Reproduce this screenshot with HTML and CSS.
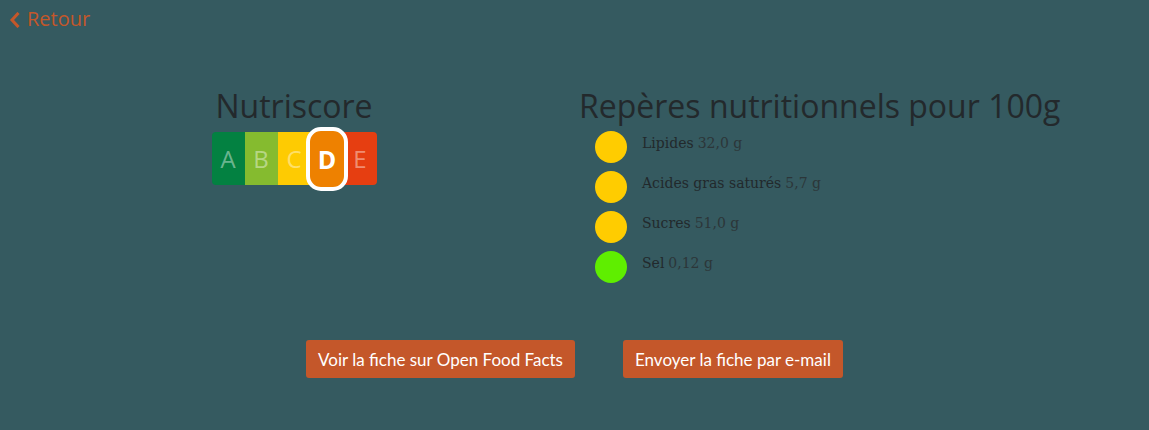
FILE: index.html
```html
<!DOCTYPE html>
<html lang="fr">
<head>
<meta charset="utf-8">
<title>Fiche produit</title>
<link rel="stylesheet" href="styles.css">
</head>
<body>
<div class="page">
  <a class="back" href="#">
    <svg class="chev" width="11" height="16" viewBox="0 0 11 16"><path d="M8.5 2 L3 8 L8.5 14" fill="none" stroke="currentColor" stroke-width="3" stroke-linecap="square" stroke-linejoin="miter"/></svg>
    <span>Retour</span>
  </a>
  <div class="content">
    <section class="col-score">
      <h2 class="title">Nutriscore</h2>
      <div class="nutri">
        <span class="cell a">A</span>
        <span class="cell b">B</span>
        <span class="cell c">C</span>
        <span class="cell d active">D</span>
        <span class="cell e">E</span>
      </div>
    </section>
    <section class="col-reperes">
      <h2 class="title">Repères nutritionnels pour 100g</h2>
      <ul class="levels">
        <li><span class="dot yellow"></span><span class="name">Lipides</span> <span class="val">32,0 g</span></li>
        <li><span class="dot yellow"></span><span class="name">Acides gras saturés</span> <span class="val">5,7 g</span></li>
        <li><span class="dot yellow"></span><span class="name">Sucres</span> <span class="val">51,0 g</span></li>
        <li><span class="dot green"></span><span class="name">Sel</span> <span class="val">0,12 g</span></li>
      </ul>
    </section>
  </div>
  <div class="actions">
    <a class="btn" href="#">Voir la fiche sur Open Food Facts</a>
    <a class="btn" href="#">Envoyer la fiche par e-mail</a>
  </div>
</div>
</body>
</html>
```
FILE: styles.css
```css
html, body {
  margin: 0;
  padding: 0;
  background: #355a60;
  height: 100%;
}
body {
  font-family: "Open Sans", sans-serif;
}
.page {
  width: 1149px;
  height: 430px;
}
.back {
  display: flex;
  align-items: center;
  gap: 7px;
  padding: 6px 0 0 9px;
  color: #c4572a;
  text-decoration: none;
  font-size: 20px;
  line-height: 26px;
  height: 26px;
}
.chev {
  display: block;
  margin-top: 1px;
}
.content {
  display: flex;
  padding-left: 144px;
  margin-top: 54px;
}
.title {
  margin: 0;
  font-weight: 400;
  font-size: 32px;
  line-height: 40px;
  color: #23292c;
}
.col-score {
  width: 300px;
  display: flex;
  flex-direction: column;
  align-items: center;
}
.nutri {
  margin-top: 6px;
  display: flex;
  height: 53px;
  align-items: center;
}
.cell {
  box-sizing: border-box;
  width: 33px;
  height: 53px;
  display: flex;
  align-items: center;
  justify-content: center;
  font-size: 24px;
  color: rgba(255,255,255,0.42);
}
.cell.a { background: #038141; border-radius: 4px 0 0 4px; }
.cell.b { background: #85bb2f; }
.cell.c { background: #fecb02; }
.cell.e { background: #e63e11; border-radius: 0 4px 4px 0; }
.cell.d.active {
  position: relative;
  z-index: 1;
  width: 42px;
  height: 64px;
  margin: 0 -4.5px;
  background: #ee8100;
  border: 4px solid #ffffff;
  border-radius: 15px;
  color: #ffffff;
  font-weight: 700;
  font-size: 25px;
}
.col-reperes {
  margin-left: 135px;
}
.levels {
  list-style: none;
  margin: 5px 0 0 16px;
  padding: 0;
}
.levels li {
  display: flex;
  align-items: flex-start;
  height: 40px;
  font-family: "DejaVu Serif", "Liberation Serif", serif;
  font-size: 14px;
  line-height: 18px;
}
.dot {
  width: 32px;
  height: 32px;
  border-radius: 50%;
  margin-right: 15px;
  flex: none;
}
.dot.yellow { background: #ffcc00; }
.dot.green { background: #5fee00; }
.name {
  color: #22292c;
  margin-top: 3px;
}
.val {
  color: #2c3639;
  margin-top: 3px;
  margin-left: 4px;
}
.actions {
  display: flex;
  justify-content: center;
  gap: 48px;
  margin-top: 49px;
}
.btn {
  display: flex;
  align-items: center;
  height: 38px;
  padding: 0 12px;
  background: #c4572a;
  border-radius: 3px;
  color: #ffffff;
  text-decoration: none;
  font-family: "Lato", sans-serif;
  font-size: 17px;
}
```
